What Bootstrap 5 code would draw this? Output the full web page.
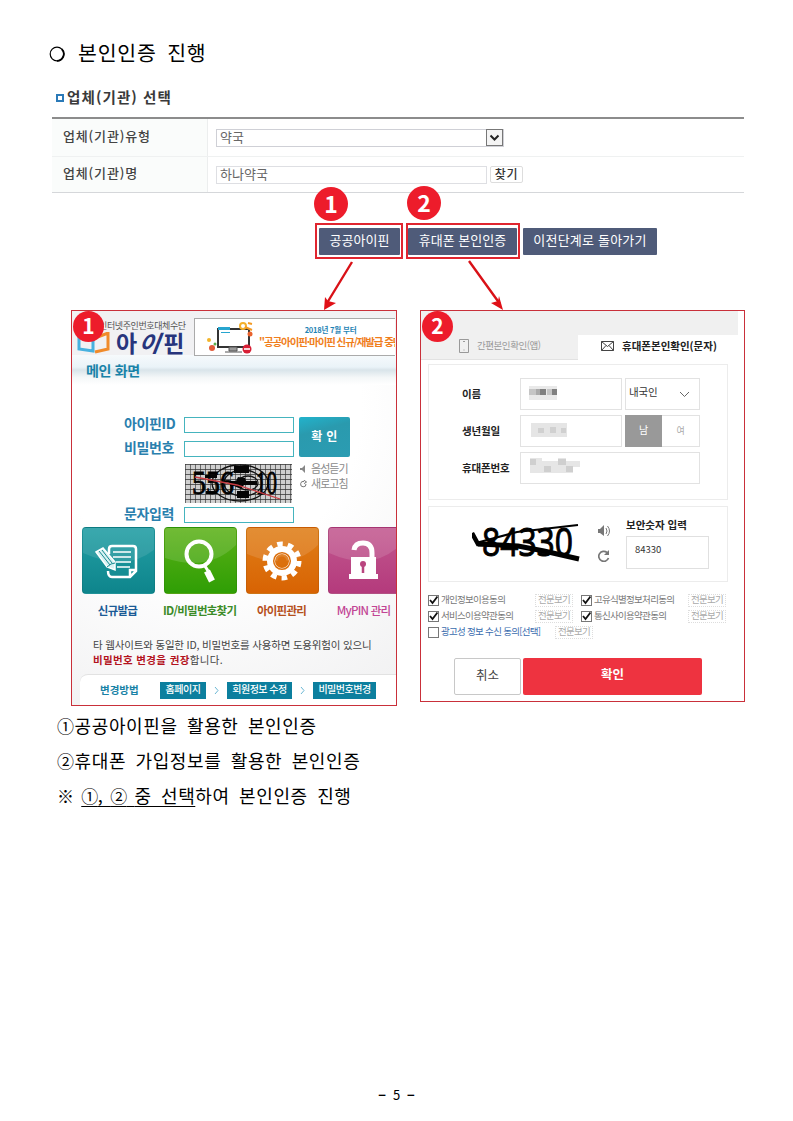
<!DOCTYPE html>
<html lang="ko">
<head>
<meta charset="utf-8">
<meta name="viewport" content="width=device-width, initial-scale=1">
<title>본인인증 진행</title>
<link href="https://cdn.jsdelivr.net/npm/bootstrap@5.3.0/dist/css/bootstrap.min.css" rel="stylesheet">
<style>
body{font-family:"Noto Sans CJK KR",sans-serif;color:#000;background:#fff;line-height:1}
.sheet{width:793px;height:1121px;overflow:hidden}
.sheet *{white-space:nowrap;border-radius:0}
.sheet svg{display:block;flex:none}
.doc-title{height:75px;padding:30px 0 0 48px;font-size:20.5px;letter-spacing:.8px;word-spacing:4px;font-weight:400}
.doc-title svg{margin-right:12px}
/* company form */
.org{margin-left:52px;width:692px}
.org-title{height:42px;padding:3px 0 0 4px;font-size:14.5px;letter-spacing:1.1px;font-weight:700;color:#3a3a3a}
.org-title i{width:8px;height:8px;border:2px solid #2b7ab8;margin-right:3px}
.org-rows{border-top:2px solid #8c8c8c;border-bottom:1px solid #d5d7da}
.org-row{height:37px}
.org-row+.org-row{height:36px;border-top:1px solid #eff1f1}
.org-key{width:156px;height:100%;padding:0 0 4px 11px;background:#fafcfb;border-right:1px solid #eceeee;font-size:13px;letter-spacing:.85px;font-weight:500;color:#444}
.org-box{height:18px;margin-left:8px;padding:0 0 2px 3px;border:1px solid #cfd0d6;font-size:13px;color:#666;background:#fff}
.org-sel{width:288px}.org-inp{width:271px;border-color:#dedfe3}
.org-arrow{width:17px;height:17px;border:1px solid #777;background:#f4f4f4;position:relative;top:1px}
.org-find{width:33px;height:17px;margin-left:3px;border:1px solid #ddd;border-radius:2px;font-size:12px;font-weight:500;color:#333;letter-spacing:.6px;padding-bottom:1px}
/* action row */
.acts{height:117px;padding:30px 0 0 315px}
.frame{height:36px;border:2px solid #e0252f;padding:3px 1px 2px 2px}
.navy{background:#4f5b79;color:#fff;height:27px;font-size:13px;padding-bottom:4px;border-radius:1px!important}
.f1{width:88px;margin-right:3px}.f2{width:114px;padding-left:0;margin-right:3px}
.back{width:134px;margin-top:5px;letter-spacing:.2px}
.num{position:absolute;width:34px;height:34px;border-radius:50%!important;background:#ed1c2b;color:#fff;font:bold 23px/32px "Noto Sans CJK KR",sans-serif;text-align:center;z-index:3}
.n1{left:-3px;top:-38px}.n2{left:-1px;top:-39px}
.np{left:1px;top:0;width:31px;height:31px;line-height:29px;font-size:21px}
.arrows{position:absolute;left:300px;top:66px;z-index:2}
/* panels */
.pane{border:1px solid #c9303a;overflow:hidden;background:#fff}
.pane-l{width:326px;height:396px;margin-left:71px;background:radial-gradient(circle at 40% 25%,#fff 45%,#f0f0f1 100%)}
.pane-r{width:325px;height:392px;margin-left:23px}
.lhead{height:44px;background:#f1f1f3}
.slogan{font-size:9px;letter-spacing:-.4px;color:#555;margin-left:27px;padding-top:10px;height:20px}
.logo{width:122px}
.logo-row{padding-left:5px;height:23px;color:#27357c;font-weight:700;font-size:23px;letter-spacing:3px}
.logo-row em{transform:skewX(-8deg);margin-left:-1px}
.banner{margin-top:7px;height:38px;width:201px;border:1px solid #aaa;border-right:0;background:#fff;overflow:hidden}
.ban-t{width:137px}
.ban-a{font-size:7.5px;color:#1f83b4;font-weight:700;letter-spacing:-.2px;padding:7px 0 0 6px;height:18px}
.ban-b{font-size:10.5px;color:#f07e1c;font-weight:700;letter-spacing:-1.1px}
.band{height:30px;padding:0 0 0 14px;background:linear-gradient(#f6fafc 0,#eaf3f8 40%,#d9e4ea 50%,#f4f7f8 75%,#fff);color:#1782a8;font-weight:700;font-size:14px;letter-spacing:-.3px}
.form-l{padding:32px 0 0 52px;height:142px}
.lab{width:60px;height:14px;font-size:14px;font-weight:700;color:#2a80ae;letter-spacing:-.4px;position:relative;top:-2px}
.inp{width:110px;height:16px;border:1px solid #45b4be;background:#fff}
.go{width:51px;height:40px;margin-left:5px;padding-bottom:3px;background:linear-gradient(165deg,#22b3cc,#2a9aae 35%,#2b9cb2);color:#fff;font-size:12px;font-weight:700;border-radius:2px!important;letter-spacing:.3px}
.cap-row{padding:7px 0 4px 61px}
.aid{font-size:11px;letter-spacing:-.95px;color:#8a8a8a;height:15px;position:relative;top:-3px}
.tiles{padding:0 0 0 10px;gap:9px;height:84px}
.tile{width:73px;flex:none}
.tile-i{height:67px;border-radius:4px!important;border:1px solid rgba(0,0,0,.08);position:relative;overflow:hidden}
.tile-i svg{position:absolute;inset:0}
.c1{background:linear-gradient(#249fa5,#0e858c)}.c2{background:linear-gradient(#5cb117,#2f9e05)}.c3{background:linear-gradient(#e07f18,#d86303)}.c4{background:linear-gradient(#c2588f,#b43a7c)}
.tile-names{margin:-6px 0 -29px 9px;gap:9px}
.tile-t{font-size:11.5px;font-weight:700;letter-spacing:-.75px;height:34px;text-align:center}
.t1{color:#1b5b96}.t2{color:#3c8c28}.t3{color:#b5501c}.t4{color:#c24594;font-weight:500}
.note{font-size:10.5px;line-height:15px;color:#444;padding:27px 0 0 21px;height:64px}
.note>span{letter-spacing:-.18px}
.note b{color:#b3131d;letter-spacing:.35px}.note u{text-decoration:none;letter-spacing:.35px}
.how{margin-left:8px;height:40px;padding:0 0 9px 20px;background:#fff;border-top:1px solid #e2e2e2;border-radius:8px 0 0 0!important;font-size:10px}
.how b{width:60px;font-size:10.5px;color:#1882a6}
.chip{height:17px;background:#0c7f9e;color:#fff;letter-spacing:-.5px;padding-bottom:3px;font-weight:500}
.k1{width:46px}.k2{width:65px}.k3{width:63px}
.sep{width:21px}
/* phone pane */
.rtop{height:24px;width:317px;background:#f0f0f0}
.tabs-r{height:25px;width:317px}
.tab-a{width:157px;background:#f0f0f0;border-bottom:1px solid #e2e2e2;color:#999;font-size:9.5px;letter-spacing:-.45px;padding:0 0 2px 38px}
.tab-b{width:160px;font-size:10.5px;font-weight:700;letter-spacing:0;padding:0 0 3px 23px;color:#222}
.boxr{width:300px;margin-left:7px;border:1px solid #ececec}
.b1{height:136px;margin-top:4px;padding:13px 0 0 33px;gap:5px}
.b2{height:76px;margin-top:6px;padding:0 0 0 43px}
.fr{height:32px}
.fk{width:58px;font-size:10.5px;font-weight:700;letter-spacing:-.15px;color:#222}
.fx{height:32px;border:1px solid #e2e2e2;font-size:10.5px;letter-spacing:-.2px;color:#333}
.x1{width:102px;margin-right:3px}.x2{width:75px;padding:0 9px 0 3px}.x2 span{padding-bottom:4px}.x3{width:180px}
.male{width:37px;height:32px;background:#999;color:#fff;font-size:10px;padding-bottom:2px}
.female{width:38px;border-left:0;color:#aaa;font-size:9px;padding-bottom:2px}
.cap-ico{width:44px;padding-top:18px;gap:13px}
.sec-w{padding-top:13px}
.sec{font-size:10.5px;font-weight:700;color:#222}
.sec-i{width:83px;height:33px;border:1px solid #e0e0e0;margin-top:5px;padding:0 0 4px 8px;font-size:9.5px;color:#333}
.agree{padding:10px 0 0 7px;font-size:9.5px;letter-spacing:-.72px;color:#777}
.ar{height:16px}
.ck{width:11px;height:11px;border:1px solid #777;margin-right:2px;flex:none}
.g1{width:94px}.g2{width:94px}.g3{width:114px;color:#3a6cae;letter-spacing:-.7px}
.see{width:38px;height:13px;border:1px dotted #ddd;color:#aaa;margin-right:8px}
.fin{padding:18px 0 0 33px}
.no{width:67px;height:37px;border:1px solid #c8c8c8;border-radius:2px!important;font-size:12.5px;color:#444;padding-bottom:3px;margin-right:2px}
.yes{width:179px;height:37px;background:#ee3340;border-radius:2px!important;color:#fff;font-weight:700;font-size:12.5px;padding-bottom:4px}
.notes{margin:0;padding:2px 0 0 57px;font-size:18px;letter-spacing:.6px;word-spacing:3.8px;height:382px}
.notes div{height:35px;line-height:35px}
.notes .pick{text-decoration:underline;text-underline-offset:3px;text-decoration-thickness:1px}
.notes .tight{letter-spacing:-.4px;word-spacing:3px}
.notes .cn{font-size:17px}
.pg{font-size:13px;text-align:center;word-spacing:4px}
</style>
</head>
<body>
<main class="sheet">
  <h1 class="doc-title d-flex align-items-center m-0 pb-0"><svg width="18" height="18" viewBox="0 0 18 18"><circle cx="9" cy="10" r="6.8" fill="none" stroke="#000" stroke-width="1.2"/><path d="M13.8 5.2A6.8 6.8 0 0 1 9 16.8" fill="none" stroke="#000" stroke-width="1.8"/></svg>본인인증 진행</h1>
  <section class="org">
    <div class="org-title d-flex align-items-center"><i></i>업체(기관) 선택</div>
    <div class="org-rows">
      <div class="org-row d-flex align-items-center"><div class="org-key d-flex align-items-center">업체(기관)유형</div>
        <div class="org-box org-sel d-flex align-items-center justify-content-between">약국<span class="org-arrow d-flex align-items-center justify-content-center"><svg width="11" height="8"><path d="M1.5 1.5l4 4 4-4" fill="none" stroke="#222" stroke-width="2"/></svg></span></div></div>
      <div class="org-row d-flex align-items-center"><div class="org-key d-flex align-items-center">업체(기관)명</div>
        <div class="org-box org-inp d-flex align-items-center">하나약국</div><div class="org-find d-flex align-items-center justify-content-center">찾기</div></div>
    </div>
  </section>
  <section class="acts d-flex position-relative">
    <div class="frame f1 position-relative"><span class="num n1">1</span><div class="navy d-flex align-items-center justify-content-center">공공아이핀</div></div>
    <div class="frame f2 position-relative"><span class="num n2">2</span><div class="navy d-flex align-items-center justify-content-center">휴대폰 본인인증</div></div>
    <div class="navy back d-flex align-items-center justify-content-center">이전단계로 돌아가기</div>
    <svg class="arrows" width="220" height="52"><g stroke="#d91117" stroke-width="2.4" fill="none"><path d="M52 3L27 44M169 2l31 43"/></g><path d="M24 51l1-13 3 4 8 2zM203 51l-12-7 7-2 1-5z" fill="#e01017"/></svg>
  </section>
  <section class="d-flex align-items-start">
    <div class="pane pane-l position-relative">
      <span class="num np">1</span>
      <div class="lhead d-flex">
        <div class="logo flex-shrink-0">
          <div class="slogan">인터넷주인번호대체수단</div>
          <div class="logo-row d-flex align-items-center"><svg width="35" height="22" viewBox="0 0 35 22"><path d="M2 3l14 4v12L2 17z" fill="none" stroke="#47b1df" stroke-width="3"/><path d="M18 6l13-5v16l-13 3" fill="none" stroke="#f08b2b" stroke-width="3"/></svg><span class="ms-1">아</span><em>이</em><span>핀</span></div>
        </div>
        <div class="banner d-flex flex-shrink-0">
          <svg width="64" height="36" viewBox="0 0 64 36"><path d="M23 10h31v18H23z" fill="#fff" stroke="#333" stroke-width="2"/><path d="M23 8h12v3H23zM26 13h9v1h-9z" fill="#27a5cf"/><path d="M34 28h8v4h-8zM30 33h17" stroke="#555" fill="#999"/><circle cx="48" cy="7" r="3" fill="none" stroke="#f4b02b" stroke-width="2"/><path d="M50 8l7 3M53 4l4 1" stroke="#f39a23" stroke-width="2"/><circle cx="55" cy="15" r="2.5" fill="#e8622d"/><circle cx="52" cy="30" r="4.5" fill="#d81f35"/><path d="M49 30h6" stroke="#fff" stroke-width="1.6"/><circle cx="14" cy="21" r="2" fill="#f3b52b"/><circle cx="17" cy="29" r="3" fill="#e15b3a"/><circle cx="20" cy="25" r="1.5" fill="#57ae4a"/></svg>
          <div class="ban-t"><div class="ban-a text-center">2018년 7월 부터</div><div class="ban-b">"공공아이핀·마이핀 신규/재발급 중단</div></div>
        </div>
      </div>
      <div class="band d-flex align-items-center">메인 화면</div>
      <div class="form-l">
        <div class="d-flex"><div class="d-flex flex-column gap-2">
            <div class="d-flex align-items-center"><span class="lab">아이핀ID</span><span class="inp"></span></div>
            <div class="d-flex align-items-center"><span class="lab">비밀번호</span><span class="inp"></span></div></div>
          <div class="go d-flex align-items-center justify-content-center">확 인</div></div>
        <div class="cap-row d-flex">
          <svg width="107" height="39" viewBox="0 0 107 39"><defs><pattern id="gr" width="5" height="5" patternUnits="userSpaceOnUse"><path d="M0 0H5M0 0V5" stroke="#333" stroke-width="1.3"/></pattern></defs><rect width="107" height="39" fill="#cfcfcf"/><rect width="107" height="39" fill="url(#gr)"/><g fill="none" stroke="#111" stroke-width="1.3"><ellipse cx="63" cy="19" rx="10" ry="7"/><ellipse cx="58" cy="19" rx="19" ry="13"/><ellipse cx="55" cy="19" rx="28" ry="18"/></g><path d="M45 17h6l2-4 7 1 1 3h11v4H59l-3 4-7-3H45zM49 2h15v7H49zM52 27h12v7H52zM20 11h12v3H20zM21 27h11v3H21z" fill="#050505"/><text y="30" font-family="Liberation Serif,serif" font-size="33" fill="#000" stroke="#000" stroke-width=".8"><tspan x="7" textLength="42" lengthAdjust="spacingAndGlyphs">556</tspan><tspan x="71" textLength="21" lengthAdjust="spacingAndGlyphs">10</tspan></text><path d="M10 13L52 21 95 35" stroke="#c83b42" stroke-width="1.3" fill="none"/></svg>
          <div class="ms-1 ps-1">
            <div class="aid d-flex align-items-center"><svg width="7" height="8"><path d="M0 3h2l3-3v8L2 5H0z" fill="#888"/></svg><span class="ms-1">음성듣기</span></div>
            <div class="aid d-flex align-items-center"><svg width="7" height="8"><path d="M6 4A2.7 2.7 0 1 1 4 1.5M3.6 0L6.6 2 4 3.6" fill="none" stroke="#777"/></svg><span class="ms-1">새로고침</span></div></div>
        </div>
        <div class="d-flex align-items-center"><span class="lab">문자입력</span><span class="inp"></span></div>
      </div>
      <div class="tiles d-flex">
        <div class="tile"><div class="tile-i c1"><svg width="73" height="67"><path d="M0 0h73v20Q45 45 0 25z" fill="#fff" opacity=".1"/><path d="M26 26v-5q0-3 3-3h21q3 0 3 3v22l-6 6H29q-4 0-4-6M53 42h-6v7" fill="none" stroke="#fff" stroke-width="2.5"/><path d="M30 24h18M30 29h18M33 34h15M34 39h13" stroke="#fff" stroke-width="1.5"/><path d="M13 24l7-4 12 14 0 8-8-3z" fill="#d9f1f2" stroke="#fff" stroke-width="1.5"/><path d="M16 23l11 14M19 22l10 13M24 39l4-3 4-1" stroke="#168b91" fill="none"/></svg></div></div>
        <div class="tile"><div class="tile-i c2"><svg width="73" height="67"><path d="M0 0h73v15Q45 45 0 30z" fill="#fff" opacity=".13"/><circle cx="34" cy="26" r="12.5" fill="none" stroke="#fff" stroke-width="4"/><path d="M40 38l3 5" stroke="#fff" stroke-width="3"/><path d="M42 43l5 10" stroke="#fff" stroke-width="6.5"/></svg></div></div>
        <div class="tile"><div class="tile-i c3"><svg width="73" height="67"><path d="M0 0h73v15Q45 45 0 26z" fill="#fff" opacity=".12"/><circle cx="35" cy="33" r="17" fill="none" stroke="#fff" stroke-width="5" stroke-dasharray="5.6 5.08"/><circle cx="35" cy="33" r="11" fill="none" stroke="#fff" stroke-width="8"/><circle cx="35" cy="33" r="8.3" fill="none" stroke="#dc7110" stroke-width="1.5"/><circle cx="35" cy="33" r="4.5" fill="#db700e"/></svg></div></div>
        <div class="tile"><div class="tile-i c4"><svg width="73" height="67"><path d="M0 0h73v15Q45 45 0 25z" fill="#fff" opacity=".13"/><path d="M25 22q1-7 9-7 9 0 9 10v8" fill="none" stroke="#fff" stroke-width="5"/><path d="M22 29h25v17h2v5H20v-5h2z" fill="#fff"/><circle cx="34" cy="36" r="3" fill="#b9457f"/><path d="M34 37v8" stroke="#b9457f" stroke-width="2.5"/></svg></div></div>
      </div>
      <div class="tile-names d-flex">
        <div class="tile tile-t t1">신규발급</div><div class="tile tile-t t2">ID/비밀번호찾기</div><div class="tile tile-t t3">아이핀관리</div><div class="tile tile-t t4">MyPIN 관리</div>
      </div>
      <div class="note"><span>타 웹사이트와 동일한 ID, 비밀번호를 사용하면 도용위험이 있으니</span><br><b>비밀번호 변경을 권장</b><u>합니다.</u></div>
      <div class="how d-flex align-items-center"><b>변경방법</b><span class="chip k1 d-flex align-items-center justify-content-center">홈페이지</span><span class="sep d-flex justify-content-center"><svg width="5" height="9"><path d="M1 1l3 3.500-3 3.500" fill="none" stroke="#6ab7d4"/></svg></span><span class="chip k2 d-flex align-items-center justify-content-center">회원정보 수정</span><span class="sep d-flex justify-content-center"><svg width="5" height="9"><path d="M1 1l3 3.500-3 3.500" fill="none" stroke="#6ab7d4"/></svg></span><span class="chip k3 d-flex align-items-center justify-content-center">비밀번호변경</span></div>
    </div>
    <div class="pane pane-r position-relative">
      <span class="num np">2</span>
      <div class="rtop"></div>
      <div class="tabs-r d-flex"><div class="tab-a d-flex align-items-center"><svg class="me-2" width="10" height="14"><path d="M.5.5h9v13h-9zM4 2.5h2M4.5 11h1" fill="none" stroke="#999"/></svg>간편본인확인(앱)</div>
        <div class="tab-b d-flex align-items-center"><svg class="me-2" width="13" height="10"><path d="M.5.5h12v9H.5zL6.500 5.500 12.500.5M.5 9.500l4.500-5M12.500 9.500L8 4.500" fill="none" stroke="#444"/></svg>휴대폰본인확인(문자)</div></div>
      <div class="boxr b1 d-flex flex-column">
        <div class="fr d-flex align-items-center"><span class="fk">이름</span><span class="fx x1"><svg width="100" height="30"><path d="M8 7h28v14H8z" fill="#e9e9e9"/><path d="M8 10h7v6H8zM26 10h5v6h-5z" fill="#c5c5c5"/><path d="M19 10h6v6h-6zM31 10h5v6h-5z" fill="#808080"/><path d="M15 10h4v6h-4z" fill="#aaa"/></svg></span><span class="fx x2 d-flex align-items-center justify-content-between"><span>내국인</span><svg width="11" height="7"><path d="M1 1l4.500 4.500L10 1" fill="none" stroke="#666"/></svg></span></div>
        <div class="fr d-flex align-items-center"><span class="fk">생년월일</span><span class="fx x1"><svg width="100" height="30"><path d="M10 7h36v14H10z" fill="#e5e5e5"/><path d="M17 12h6v5h-6zM29 11h6v6h-6zM40 12h5v5h-5z" fill="#d0d0d0"/></svg></span><span class="male d-flex align-items-center justify-content-center">남</span><span class="fx female d-flex align-items-center justify-content-center">여</span></div>
        <div class="fr d-flex align-items-center"><span class="fk">휴대폰번호</span><span class="fx x3"><svg width="100" height="30"><path d="M9 5h12v3h16V5h8v3h14v6H52v6H9z" fill="#e6e6e6"/><path d="M9 6h6v6H9zM23 13h7v6h-7zM37 6h8v6h-8zM45 13h7v6h-7z" fill="#cfcfcf"/></svg></span></div>
      </div>
      <div class="boxr b2 d-flex">
        <svg width="110" height="74"><text x="10" y="49" font-family="Open Sans,sans-serif" font-size="38" textLength="91" lengthAdjust="spacingAndGlyphs" stroke="#000" stroke-width="1">84330</text><path d="M0 26l6 11h14" fill="none" stroke="#000" stroke-width="4.500"/><path d="M4 36L45 25 106 18" fill="none" stroke="#000" stroke-width="2.2"/><path d="M6 37l40 2 26 5 35 8" fill="none" stroke="#000" stroke-width="5"/></svg>
        <div class="cap-ico d-flex flex-column ps-3"><svg width="12" height="12"><path d="M0 4h2l4-4v11L2 8H0z" fill="#777"/><path d="M8 3q2 3 0 6M9.500 1q4 5 0 10" fill="none" stroke="#777"/></svg><svg width="12" height="12"><path d="M10.500 8A5 5 0 1 1 9 2.500" fill="none" stroke="#777" stroke-width="1.700"/><path d="M11 0v5H6z" fill="#777"/></svg></div>
        <div class="sec-w"><div class="sec">보안숫자 입력</div><div class="sec-i d-flex align-items-center">84330</div></div>
      </div>
      <div class="agree">
        <div class="ar d-flex align-items-center"><svg class="ck" viewBox="0 0 9 9"><path d="M1 4l2.500 3L8.500.5" fill="none" stroke="#111" stroke-width="1.800"/></svg><span class="g1">개인정보이용동의</span><span class="see d-flex align-items-center justify-content-center">전문보기</span><svg class="ck" viewBox="0 0 9 9"><path d="M1 4l2.500 3L8.500.5" fill="none" stroke="#111" stroke-width="1.800"/></svg><span class="g2">고유식별정보처리동의</span><span class="see d-flex align-items-center justify-content-center">전문보기</span></div>
        <div class="ar d-flex align-items-center"><svg class="ck" viewBox="0 0 9 9"><path d="M1 4l2.500 3L8.500.5" fill="none" stroke="#111" stroke-width="1.800"/></svg><span class="g1">서비스이용약관동의</span><span class="see d-flex align-items-center justify-content-center">전문보기</span><svg class="ck" viewBox="0 0 9 9"><path d="M1 4l2.500 3L8.500.5" fill="none" stroke="#111" stroke-width="1.800"/></svg><span class="g2">통신사이용약관동의</span><span class="see d-flex align-items-center justify-content-center">전문보기</span></div>
        <div class="ar d-flex align-items-center"><span class="ck"></span><span class="g3">광고성 정보 수신 동의[선택]</span><span class="see d-flex align-items-center justify-content-center">전문보기</span></div>
      </div>
      <div class="fin d-flex"><div class="no d-flex align-items-center justify-content-center">취소</div><div class="yes d-flex align-items-center justify-content-center">확인</div></div>
    </div>
  </section>
  <section class="notes">
    <div><span class="cn">①</span>공공아이핀을 활용한 본인인증</div>
    <div><span class="cn">②</span>휴대폰 가입정보를 활용한 본인인증</div>
    <div><span class="tight"><span class="cn">※</span> <span class="pick"><span class="cn">①</span>, <span class="cn">②</span> </span></span><span class="pick">중 선택</span>하여 본인인증 진행</div>
  </section>
  <footer class="pg"><b>−</b> 5 <b>−</b></footer>
</main>
<script src="https://cdn.jsdelivr.net/npm/bootstrap@5.3.0/dist/js/bootstrap.bundle.min.js"></script>
</body>
</html>
